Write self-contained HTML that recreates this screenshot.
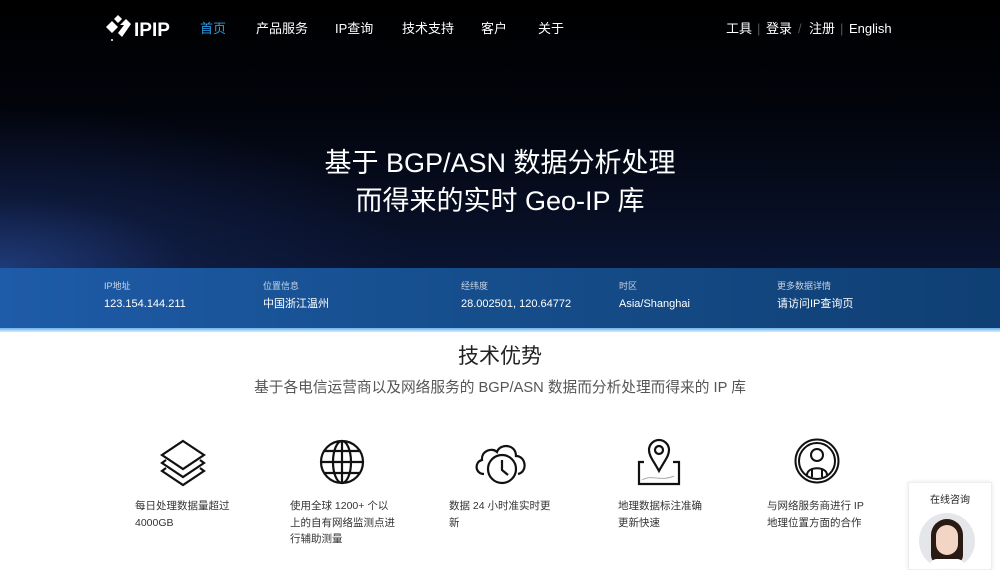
<!DOCTYPE html>
<html><head><meta charset="utf-8">
<style>
*{margin:0;padding:0;box-sizing:border-box}
body{width:1000px;height:570px;overflow:hidden;background:#fff;font-family:"Liberation Sans","Noto Sans CJK SC",sans-serif;position:relative}
.hero{position:absolute;left:0;top:0;width:1000px;height:268px;background:radial-gradient(ellipse 420px 160px at 0px 268px,#1f3a78 0%,rgba(20,35,80,0.5) 45%,rgba(0,0,0,0) 100%),linear-gradient(180deg,#000 0%,#02040b 40%,#0a1430 100%)}
.nav{position:absolute;top:20px;font-size:13px;color:#fff;white-space:nowrap}
.nav span{position:absolute;line-height:18px;top:0}
.title{position:absolute;top:144px;left:0;width:1000px;text-align:center;color:#fff;font-size:27px;line-height:38px}
.bar{position:absolute;top:268px;left:0;width:1000px;height:60px;background:linear-gradient(90deg,#1e5ba8 0%,#175090 40%,#0f3f73 100%)}
.line{position:absolute;top:328px;left:0;width:1000px;height:4px;background:linear-gradient(180deg,#6fb1ea,#d8ecfb)}
.bi{position:absolute;top:280px;color:#fff}
.bi .l{font-size:9px;opacity:.75;line-height:12px}
.bi .v{font-size:11px;margin-top:5px;line-height:14px}
h2{position:absolute;top:340px;width:1000px;text-align:center;font-size:21px;font-weight:normal;color:#222}
.sub{position:absolute;top:376px;width:1000px;text-align:center;font-size:14.7px;color:#555}
.f{position:absolute;top:498px;font-size:10.5px;color:#333;line-height:16.5px;width:130px}
.ic{position:absolute;top:438px}
.chat{position:absolute;left:908px;top:482px;width:84px;height:88px;background:#fff;border:1px solid #eee;box-shadow:0 0 4px rgba(0,0,0,.1)}
</style></head><body>
<div class="hero"></div>
<svg style="position:absolute;left:104px;top:15px" width="70" height="28" viewBox="0 0 70 28">
<path d="M2 12 L8 6 L14 12 L8 18Z M10 4 L14 0 L18 4 L14 8Z M16 10 L22 4 L27 9 L18 22 L14 18 L20 10Z" fill="#fff"/>
<circle cx="8" cy="25" r="1" fill="#fff"/>
<text x="30" y="21" fill="#fff" font-size="19" font-weight="bold" font-family="Liberation Sans">IPIP</text>
</svg>
<div class="nav" style="left:0">
<span style="left:200px;color:#2a9fe8">首页</span>
<span style="left:256px">产品服务</span>
<span style="left:335px">IP查询</span>
<span style="left:402px">技术支持</span>
<span style="left:481px">客户</span>
<span style="left:538px">关于</span>
<span style="left:726px">工具</span>
<span style="left:757px;color:#555">|</span>
<span style="left:766px">登录</span>
<span style="left:798px;color:#555">/</span>
<span style="left:809px">注册</span>
<span style="left:840px;color:#555">|</span>
<span style="left:849px">English</span>
</div>
<div class="title">基于 BGP/ASN 数据分析处理<br>而得来的实时 Geo-IP 库</div>
<div class="bar"></div><div class="line"></div>
<div class="bi" style="left:104px"><div class="l">IP地址</div><div class="v">123.154.144.211</div></div>
<div class="bi" style="left:263px"><div class="l">位置信息</div><div class="v">中国浙江温州</div></div>
<div class="bi" style="left:461px"><div class="l">经纬度</div><div class="v">28.002501, 120.64772</div></div>
<div class="bi" style="left:619px"><div class="l">时区</div><div class="v">Asia/Shanghai</div></div>
<div class="bi" style="left:777px"><div class="l">更多数据详情</div><div class="v">请访问IP查询页</div></div>
<h2>技术优势</h2>
<div class="sub">基于各电信运营商以及网络服务的 BGP/ASN 数据而分析处理而得来的 IP 库</div>
<svg class="ic" style="left:158px" width="50" height="50" viewBox="0 0 50 50" fill="none" stroke="#111" stroke-width="2.2"><path d="M25 3 L46 17 L25 31 L4 17Z"/><path d="M8 22 L4 25 L25 39 L46 25 L42 22"/><path d="M8 30 L4 33 L25 47 L46 33 L42 30"/></svg>
<svg class="ic" style="left:318px" width="48" height="48" viewBox="0 0 48 48" fill="none" stroke="#111" stroke-width="2.2"><circle cx="24" cy="24" r="21"/><ellipse cx="24" cy="24" rx="9" ry="21"/><path d="M24 3V45M3 24H45M7 13H41M7 35H41"/></svg>
<svg class="ic" style="left:472px" width="58" height="48" viewBox="0 0 58 48" fill="none" stroke="#111" stroke-width="2.2"><path d="M12 36 C3 36 2 24 10 22 C9 13 20 9 25 14 C28 5 44 6 44 18 C54 18 56 34 46 36"/><circle cx="30" cy="31" r="14" fill="#fff"/><path d="M30 22V32L36 37"/></svg>
<svg class="ic" style="left:636px" width="46" height="48" viewBox="0 0 46 48" fill="none" stroke="#111" stroke-width="2.2"><path d="M8 24H3V46H43V24H37"/><path d="M23 33 C17 22 13 18 13 12 A10 10 0 0 1 33 12 C33 18 29 22 23 33Z"/><circle cx="23" cy="12" r="4"/><path d="M6 42 C15 36 25 44 38 38" stroke="#aaa" stroke-width="1"/></svg>
<svg class="ic" style="left:794px" width="46" height="46" viewBox="0 0 46 46" fill="none" stroke="#111" stroke-width="2"><circle cx="23" cy="23" r="21.5"/><circle cx="23" cy="23" r="18"/><circle cx="23" cy="17" r="6"/><path d="M13 37 C13 28 33 28 33 37M18 31V39M28 31V39"/></svg>
<div class="f" style="left:135px">每日处理数据量超过<br>4000GB</div>
<div class="f" style="left:290px">使用全球 1200+ 个以<br>上的自有网络监测点进<br>行辅助测量</div>
<div class="f" style="left:449px">数据 24 小时准实时更<br>新</div>
<div class="f" style="left:618px">地理数据标注准确<br>更新快速</div>
<div class="f" style="left:767px">与网络服务商进行 IP<br>地理位置方面的合作</div>
<div class="chat"><div style="text-align:center;font-size:10px;color:#222;margin-top:8px">在线咨询</div>
<div style="position:absolute;left:10px;top:30px;width:56px;height:56px;border-radius:50%;background:#e5e6ea;overflow:hidden"><div style="position:absolute;left:12px;top:6px;width:32px;height:46px;border-radius:16px 16px 10px 10px;background:#2a1a14"></div><div style="position:absolute;left:17px;top:12px;width:22px;height:30px;border-radius:11px;background:#f2d5c4"></div><div style="position:absolute;left:10px;top:46px;width:36px;height:20px;background:#fff;border-radius:8px"></div></div></div>
</body></html>
